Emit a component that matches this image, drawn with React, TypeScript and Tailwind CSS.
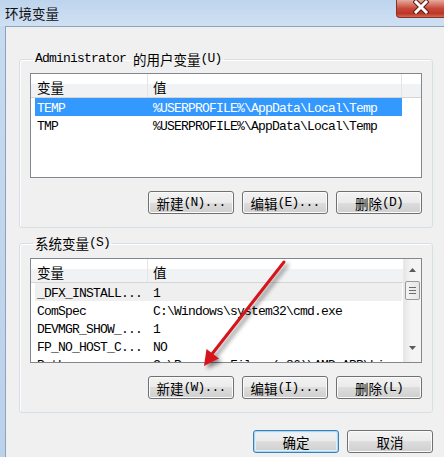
import React from "react";

const MONO = "font-['Liberation_Mono',monospace] text-[13px] tracking-[-0.8px] whitespace-pre";
const CJKF = "font-['Noto_Sans_CJK_SC',sans-serif] text-[13.5px]";

function Txt({ s }: { s: string }) {
  const parts = s.split(/([\u3400-\u9fff]+)/).filter((p) => p.length > 0);
  return (
    <>
      {parts.map((p, i) =>
        /[\u3400-\u9fff]/.test(p) ? (
          <span key={i} className={CJKF}>
            {p}
          </span>
        ) : (
          <span key={i} className={MONO}>
            {p}
          </span>
        )
      )}
    </>
  );
}

function Btn({ label, def }: { label: string; def?: boolean }) {
  return (
    <div
      className={`w-[86px] h-[23px] rounded-[3px] border flex items-center justify-center leading-[16px] text-black bg-[linear-gradient(#f2f2f2_0%,#ebebeb_50%,#dddddd_50%,#cfcfcf_100%)] ${
        def
          ? "border-[#3c7fb1] shadow-[inset_0_0_0_1px_#a6d8f5,inset_0_0_0_2px_#dcf0fb]"
          : "border-[#707070] shadow-[inset_0_0_0_1px_#fbfbfb]"
      }`}
    >
      <Txt s={label} />
    </div>
  );
}

function Header({ extra }: { extra?: boolean }) {
  return (
    <div className="h-[24px] flex shrink-0 border-b border-[#d5d5d5] bg-[linear-gradient(#ffffff_0%,#ffffff_45%,#f1f2f4_45%,#f1f2f4_100%)] leading-[18px] text-black">
      <div className="w-[117px] pl-[6px] pt-[3px] border-r border-[#e3e5e7] flex items-center">
        <Txt s="变量" />
      </div>
      <div className={`${extra ? "w-[254px] border-r border-[#e3e5e7]" : "flex-1"} pl-[5px] pt-[3px] flex items-center`}>
        <Txt s="值" />
      </div>
      {extra ? <div className="flex-1" /> : null}
    </div>
  );
}

type Row = { n: string; v: string; sel?: boolean; hot?: boolean };

function Rows({ rows }: { rows: Row[] }) {
  return (
    <div className="flex flex-col">
      {rows.map((r, i) => (
        <div
          key={i}
          className={`ml-[4px] w-[367px] h-[18px] flex leading-[18px] shrink-0 ${
            r.sel ? "bg-[#3399ff] text-white" : r.hot ? "bg-[#efefef] text-black" : "text-black"
          }`}
        >
          <div className="w-[116px] h-[18px] pl-[2px] pt-[4px] overflow-hidden flex items-center">
            <Txt s={r.n} />
          </div>
          <div className="flex-1 h-[18px] pl-[2px] pt-[4px] overflow-hidden flex items-center">
            <Txt s={r.v} />
          </div>
        </div>
      ))}
    </div>
  );
}

function ScrollBar() {
  return (
    <div className="w-[18px] flex flex-col bg-[linear-gradient(90deg,#e6e6e6,#f4f4f4_40%,#f4f4f4)] border-l border-[#e8e8e8]">
      <div className="h-[22px] flex items-center justify-center">
        <svg width="7" height="4" viewBox="0 0 7 4">
          <path d="M3.5 0 L7 4 L0 4 Z" fill="#5b5b5b" />
        </svg>
      </div>
      <div className="mx-[1px] h-[19px] rounded-[2px] border border-[#9a9a9a] bg-[linear-gradient(90deg,#f3f3f3,#e6e6e6)] flex flex-col items-center justify-center gap-[2px]">
        <div className="w-[7px] h-[1px] bg-[#6b6b6b]" />
        <div className="w-[7px] h-[1px] bg-[#6b6b6b]" />
        <div className="w-[7px] h-[1px] bg-[#6b6b6b]" />
      </div>
      <div className="flex-1" />
      <div className="h-[24px] flex items-center justify-center pb-[4px]">
        <svg width="7" height="4" viewBox="0 0 7 4">
          <path d="M0 0 L7 0 L3.5 4 Z" fill="#5b5b5b" />
        </svg>
      </div>
    </div>
  );
}

function Group({ title, children, pt }: { title: string; children: React.ReactNode; pt: string }) {
  return (
    <fieldset className={`border border-[#d5dfe5] rounded-[3px] px-[10px] pb-[13px] ${pt} shadow-[inset_1px_1px_0_#ffffff]`}>
      <legend className="ml-[3px] px-[2px] text-black">
        <div className="h-[16px] flex items-center leading-[16px]">
          <Txt s={title} />
        </div>
      </legend>
      {children}
    </fieldset>
  );
}

export default function App() {
  const user: Row[] = [
    { n: "TEMP", v: "%USERPROFILE%\\AppData\\Local\\Temp", sel: true },
    { n: "TMP", v: "%USERPROFILE%\\AppData\\Local\\Temp" },
  ];
  const sys: Row[] = [
    { n: "_DFX_INSTALL...", v: "1", hot: true },
    { n: "ComSpec", v: "C:\\Windows\\system32\\cmd.exe" },
    { n: "DEVMGR_SHOW_...", v: "1" },
    { n: "FP_NO_HOST_C...", v: "NO" },
    { n: "Path", v: "C:\\Program Files (x86)\\AMD APP\\bin" },
  ];
  return (
    <div className="relative w-[444px] h-[457px] overflow-hidden flex flex-col bg-[#c3d7ee]">
      {/* title bar */}
      <div className="h-[26px] shrink-0 flex bg-[linear-gradient(#bdd4ed,#c9dcf1_60%,#cfe0f3)]">
        <div className="pl-[5px] h-[26px] flex items-center text-[#111]">
          <span className="font-['Noto_Sans_CJK_SC',sans-serif] text-[13.5px] leading-[20px]">环境变量</span>
        </div>
        <div className="ml-auto w-[48px] h-[18px] rounded-bl-[4px] border-l border-b border-[#8a3024] bg-[linear-gradient(#e7aa9f_0%,#d77a6c_25%,#c8473a_50%,#bd3626_80%,#cf6a55_100%)] flex items-center justify-center">
          <svg width="16" height="14" viewBox="0 0 16 14" className="mt-[-4px]">
            <path d="M3 2 L13 12 M13 2 L3 12" stroke="#5a1a12" strokeWidth="5" strokeLinecap="square" />
            <path d="M3 2 L13 12 M13 2 L3 12" stroke="#ffffff" strokeWidth="3" strokeLinecap="square" />
          </svg>
        </div>
      </div>
      {/* body */}
      <div className="flex-1 flex">
        <div className="w-[5px] bg-[linear-gradient(#c6daf0,#bcd2ea)]" />
        <div className="flex-1 bg-[#f0f0f0] border-l border-t border-[#8da2bb] pl-[13px] pr-[11px] pt-[24px] flex flex-col">
          <Group title="Administrator 的用户变量(U)" pt="pt-[6px]">
            <div className="h-[105px] border border-[#828790] bg-white flex flex-col overflow-hidden">
              <Header extra />
              <Rows rows={user} />
            </div>
            <div className="mt-[13px] flex justify-end gap-[8px]">
              <Btn label="新建(N)..." />
              <Btn label="编辑(E)..." />
              <Btn label="删除(D)" />
            </div>
          </Group>
          <div className="mt-[7px]">
            <Group title="系统变量(S)" pt="pt-[7px]">
              <div className="h-[105px] border border-[#828790] bg-white flex overflow-hidden">
                <div className="flex-1 flex flex-col overflow-hidden">
                  <Header />
                  <Rows rows={sys} />
                </div>
                <ScrollBar />
              </div>
              <div className="mt-[13px] flex justify-end gap-[8px]">
                <Btn label="新建(W)..." />
                <Btn label="编辑(I)..." />
                <Btn label="删除(L)" />
              </div>
            </Group>
          </div>
          <div className="mt-[17px] flex justify-end gap-[8px]">
            <Btn label="确定" def />
            <Btn label="取消" />
          </div>
        </div>
      </div>
      {/* red annotation arrow */}
      <svg className="absolute left-0 top-0 pointer-events-none" width="444" height="457" viewBox="0 0 444 457">
        <defs>
          <filter id="sh" x="-20%" y="-20%" width="140%" height="140%">
            <feDropShadow dx="3" dy="3" stdDeviation="2" floodColor="#000" floodOpacity="0.45" />
          </filter>
        </defs>
        <g filter="url(#sh)">
          <line x1="284" y1="262" x2="212" y2="354" stroke="#d4171c" strokeWidth="3" strokeLinecap="round" />
          <polygon points="204,366 206.5,349 219,358.5" fill="#d4171c" />
        </g>
      </svg>
    </div>
  );
}
